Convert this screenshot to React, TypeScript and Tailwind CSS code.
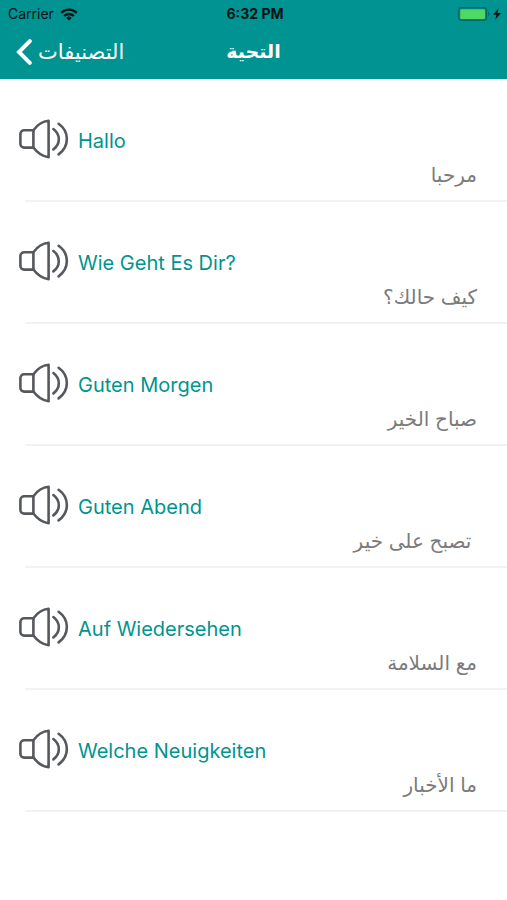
interface Phrase {
    german: string;
    arabic: string;
}

const phrases: Phrase[] = [
    { german: 'Hallo', arabic: 'مرحبا' },
    { german: 'Wie Geht Es Dir?', arabic: 'كيف حالك؟' },
    { german: 'Guten Morgen', arabic: 'صباح الخير' },
    { german: 'Guten Abend', arabic: ' تصبح على خير' },
    { german: 'Auf Wiedersehen', arabic: 'مع السلامة' },
    { german: 'Welche Neuigkeiten', arabic: 'ما الأخبار' },
];

function WifiIcon() {
    return (
        <svg viewBox="0 0 18 13" className="h-[13px] w-[18px]" fill="none" stroke="currentColor" strokeWidth="2.3" aria-hidden="true">
            <path d="M1.2 4.9a11 11 0 0 1 15.6 0" />
            <path d="M4.2 8a6.8 6.8 0 0 1 9.6 0" />
            <path d="M9 12.6 6.3 9.9a3.8 3.8 0 0 1 5.4 0Z" fill="currentColor" stroke="none" />
        </svg>
    );
}

function BatteryIcon() {
    return (
        <svg viewBox="0 0 44 14" className="h-[14px] w-[44px]" aria-hidden="true">
            <rect x="0.8" y="0.8" width="27.6" height="12.4" rx="2.6" fill="none" stroke="#066a6b" strokeWidth="1.5" />
            <rect x="2.2" y="2.2" width="24.8" height="9.8" rx="1.2" fill="#4cd964" />
            <path d="M30 4.6c1.9.5 1.9 4.3 0 4.8Z" fill="#066a6b" />
            <path d="M40.8 1.2 35 7.8h3.5l-1.3 5 5.8-6.8h-3.6Z" fill="#031414" />
        </svg>
    );
}

function SpeakerIcon() {
    return (
        <svg
            viewBox="0 0 50 40"
            className="h-10 w-[50px]"
            fill="none"
            stroke="#55585c"
            strokeWidth="2.6"
            strokeLinecap="round"
            strokeLinejoin="round"
            aria-hidden="true"
        >
            <path d="M14.4 11.2H5.2A3.8 3.8 0 0 0 1.4 15v9.8a3.8 3.8 0 0 0 3.8 3.8h9.2Z" />
            <path d="M14.4 11.2C18.4 5.8 23.4 2.4 29.6 1.8v36.4C23.4 37.6 18.4 34 14.4 28.6" />
            <path d="M34.4 10c7.2 5.4 7.2 15 0 20.4" />
            <path d="M39.6 4.8c11 7.8 11 22.6 0 30.6" />
        </svg>
    );
}

function PhraseRow({ phrase }: { phrase: Phrase }) {
    return (
        <li>
            <div className="flex items-center px-[19px]">
                <button type="button" className="flex shrink-0 items-center gap-[9px]">
                    <SpeakerIcon />
                    <span lang="de" className="pt-1 text-xl leading-6 text-[#009490]">{phrase.german}</span>
                </button>
            </div>
            <p
                lang="ar"
                dir="rtl"
                className="pr-[30px] text-xl leading-[33px] whitespace-pre text-[#7b7b7b]"
            >
                {phrase.arabic}
            </p>
            <div className="ml-[25px] mt-2 h-[2px] bg-[#f2f2f2]" />
        </li>
    );
}

export default function App() {
    return (
        <div className="min-h-screen bg-white font-['Inter','DejaVu_Sans',sans-serif]">
            <header className="bg-[#009391] pb-[10px]">
                {/* Status bar */}
                <div className="grid grid-cols-3 items-center pl-2 pr-[5px] pt-1 text-sm leading-5 text-[#031414]">
                    <div className="flex items-center gap-[6px]">
                        <span>Carrier</span>
                        <WifiIcon />
                    </div>
                    <span className="text-center font-bold">6:32 PM</span>
                    <div className="flex justify-end">
                        <BatteryIcon />
                    </div>
                </div>

                {/* Navigation bar */}
                <nav className="grid grid-cols-3 items-center px-4 pt-[10px] leading-[35px] text-white">
                    <button type="button" className="flex items-center gap-[6px]">
                        <svg viewBox="0 0 16 26" className="h-[26px] w-4 shrink-0" fill="none" stroke="currentColor" strokeWidth="4" strokeLinecap="round" aria-hidden="true">
                            <path d="M13.8 2.2 3 13l10.8 10.8" />
                        </svg>
                        <span lang="ar" dir="rtl" className="text-[21px]">التصنيفات</span>
                    </button>
                    <h1 lang="ar" dir="rtl" className="text-center text-[19px] font-bold">التحية</h1>
                </nav>
            </header>

            <main className="pt-10">
                <ul className="flex flex-col gap-[39px]">
                    {phrases.map((phrase) => (
                        <PhraseRow key={phrase.german} phrase={phrase} />
                    ))}
                </ul>
            </main>
        </div>
    );
}
